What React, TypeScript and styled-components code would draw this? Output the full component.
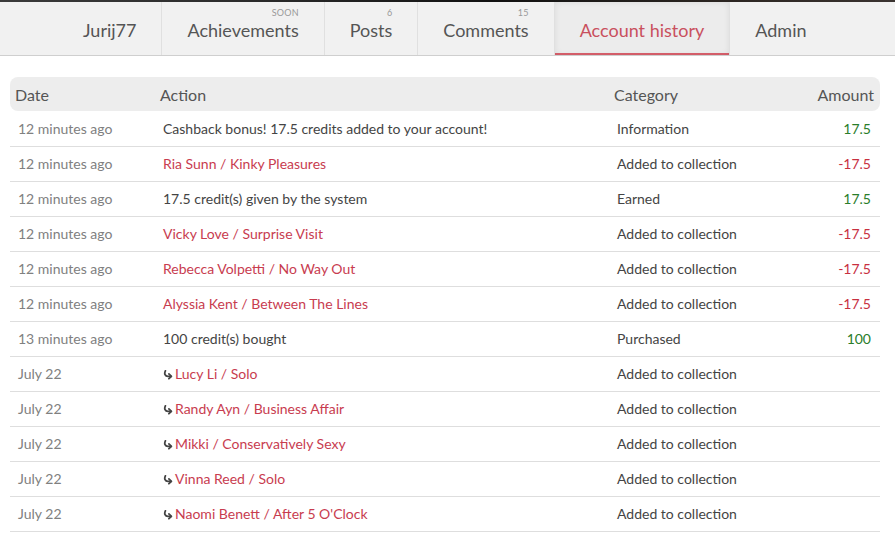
import React from "react";
import styled, { createGlobalStyle } from "styled-components";

const GlobalStyle = createGlobalStyle`
  html, body {
    margin: 0;
    padding: 0;
    background: #fff;
    font-family: Lato, "Open Sans", sans-serif;
  }
`;

type Tab = { label: string; badge?: string; active?: boolean };

const tabs: Tab[] = [
  { label: "Jurij77" },
  { label: "Achievements", badge: "SOON" },
  { label: "Posts", badge: "6" },
  { label: "Comments", badge: "15" },
  { label: "Account history", active: true },
  { label: "Admin" },
];

type Row = {
  date: string;
  action: string;
  link?: boolean;
  sub?: boolean;
  category: string;
  amount?: string;
};

const rows: Row[] = [
  { date: "12 minutes ago", action: "Cashback bonus! 17.5 credits added to your account!", category: "Information", amount: "17.5" },
  { date: "12 minutes ago", action: "Ria Sunn / Kinky Pleasures", link: true, category: "Added to collection", amount: "-17.5" },
  { date: "12 minutes ago", action: "17.5 credit(s) given by the system", category: "Earned", amount: "17.5" },
  { date: "12 minutes ago", action: "Vicky Love / Surprise Visit", link: true, category: "Added to collection", amount: "-17.5" },
  { date: "12 minutes ago", action: "Rebecca Volpetti / No Way Out", link: true, category: "Added to collection", amount: "-17.5" },
  { date: "12 minutes ago", action: "Alyssia Kent / Between The Lines", link: true, category: "Added to collection", amount: "-17.5" },
  { date: "13 minutes ago", action: "100 credit(s) bought", category: "Purchased", amount: "100" },
  { date: "July 22", action: "Lucy Li / Solo", link: true, sub: true, category: "Added to collection" },
  { date: "July 22", action: "Randy Ayn / Business Affair", link: true, sub: true, category: "Added to collection" },
  { date: "July 22", action: "Mikki / Conservatively Sexy", link: true, sub: true, category: "Added to collection" },
  { date: "July 22", action: "Vinna Reed / Solo", link: true, sub: true, category: "Added to collection" },
  { date: "July 22", action: "Naomi Benett / After 5 O'Clock", link: true, sub: true, category: "Added to collection" },
];

function SubArrow() {
  return (
    <ArrowIcon viewBox="0 0 10 10" width="10" height="10">
      <path d="M2.4 0.8 C1 3.6 2 6.3 5 6.3 L8 6.3" fill="none" stroke="#444" strokeWidth="1.8" strokeLinecap="round" />
      <path d="M5.9 3.9 L8.4 6.3 L5.9 8.7" fill="none" stroke="#444" strokeWidth="1.8" strokeLinecap="round" strokeLinejoin="round" />
    </ArrowIcon>
  );
}

export default function App() {
  return (
    <>
      <GlobalStyle />
      <Page>
        <TopStrip />
        <TabBar>
          {tabs.map((t) => (
            <TabItem key={t.label} $active={t.active}>
              <TabLabel>
                {t.label}
                {t.badge && <Badge>{t.badge}</Badge>}
              </TabLabel>
            </TabItem>
          ))}
        </TabBar>

        <Content>
          <Table>
            <colgroup>
              <col style={{ width: 145 }} />
              <col style={{ width: 454 }} />
              <col style={{ width: 170 }} />
              <col />
            </colgroup>
            <thead>
              <tr>
                <HeadCell>Date</HeadCell>
                <HeadCell>Action</HeadCell>
                <HeadCell>Category</HeadCell>
                <HeadCell $right>Amount</HeadCell>
              </tr>
            </thead>
            <tbody>
              {rows.map((r, i) => (
                <BodyRow key={i}>
                  <DateCell>{r.date}</DateCell>
                  <ActionCell $link={r.link}>
                    {r.sub && <SubArrow />}
                    {r.action}
                  </ActionCell>
                  <CategoryCell>{r.category}</CategoryCell>
                  <AmountCell $negative={r.amount?.startsWith("-")}>{r.amount}</AmountCell>
                </BodyRow>
              ))}
            </tbody>
          </Table>
        </Content>
      </Page>
    </>
  );
}

/* ================== styled-components ================== */

const Page = styled.div`
  width: 895px;
  min-height: 538px;
  background: #fff;
`;

const TopStrip = styled.div`
  height: 2px;
  background: linear-gradient(90deg, #3a3a3a 0%, #2a2a2a 30%, #111 55%, #2b2521 80%, #3a3330 100%);
`;

const TabBar = styled.nav`
  display: flex;
  height: 53px;
  padding-left: 58px;
  background: #f1f1f1;
  border-bottom: 1px solid #cfcfcf;
`;

const TabItem = styled.div<{ $active?: boolean }>`
  display: flex;
  align-items: center;
  padding: 0 25px;
  border-right: 1px solid #e0e0e0;
  font-size: 18px;
  color: ${({ $active }) => ($active ? "#c9505e" : "#555")};
  background: ${({ $active }) => ($active ? "#ececec" : "transparent")};
  box-shadow: ${({ $active }) =>
    $active ? "inset 0 0 6px rgba(0, 0, 0, 0.08), inset 0 -2px 0 #d9606c" : "none"};
  &:last-child {
    border-right: none;
  }
`;

const TabLabel = styled.span`
  position: relative;
  padding-top: 2px;
`;

const Badge = styled.span`
  position: absolute;
  right: 0;
  top: -10px;
  font-size: 9px;
  color: #999;
  letter-spacing: 0.2px;
`;

const Content = styled.div`
  padding: 21px 15px 0 10px;
`;

const Table = styled.table`
  width: 870px;
  table-layout: fixed;
  border-collapse: collapse;
  border-spacing: 0;
`;

const HeadCell = styled.th<{ $right?: boolean }>`
  height: 34px;
  padding: 0 6px 0 5px;
  background: #ededed;
  text-align: ${({ $right }) => ($right ? "right" : "left")};
  font-size: 16px;
  font-weight: 400;
  color: #555;
  &:first-child {
    border-radius: 8px 0 0 8px;
  }
  &:last-child {
    border-radius: 0 8px 8px 0;
  }
`;

const BodyRow = styled.tr`
  height: 35px;
  border-bottom: 1px solid #dedede;
`;

const Cell = styled.td`
  padding: 0 9px 0 8px;
  font-size: 14px;
  vertical-align: middle;
  white-space: nowrap;
`;

const DateCell = styled(Cell)`
  color: #808080;
`;

const ActionCell = styled(Cell)<{ $link?: boolean }>`
  color: ${({ $link }) => ($link ? "#c83c4f" : "#444")};
`;

const ArrowIcon = styled.svg`
  margin-right: 2px;
  vertical-align: -1px;
`;

const CategoryCell = styled(Cell)`
  color: #444;
`;

const AmountCell = styled(Cell)<{ $negative?: boolean }>`
  text-align: right;
  color: ${({ $negative }) => ($negative ? "#c8303f" : "#2a7d2a")};
`;
